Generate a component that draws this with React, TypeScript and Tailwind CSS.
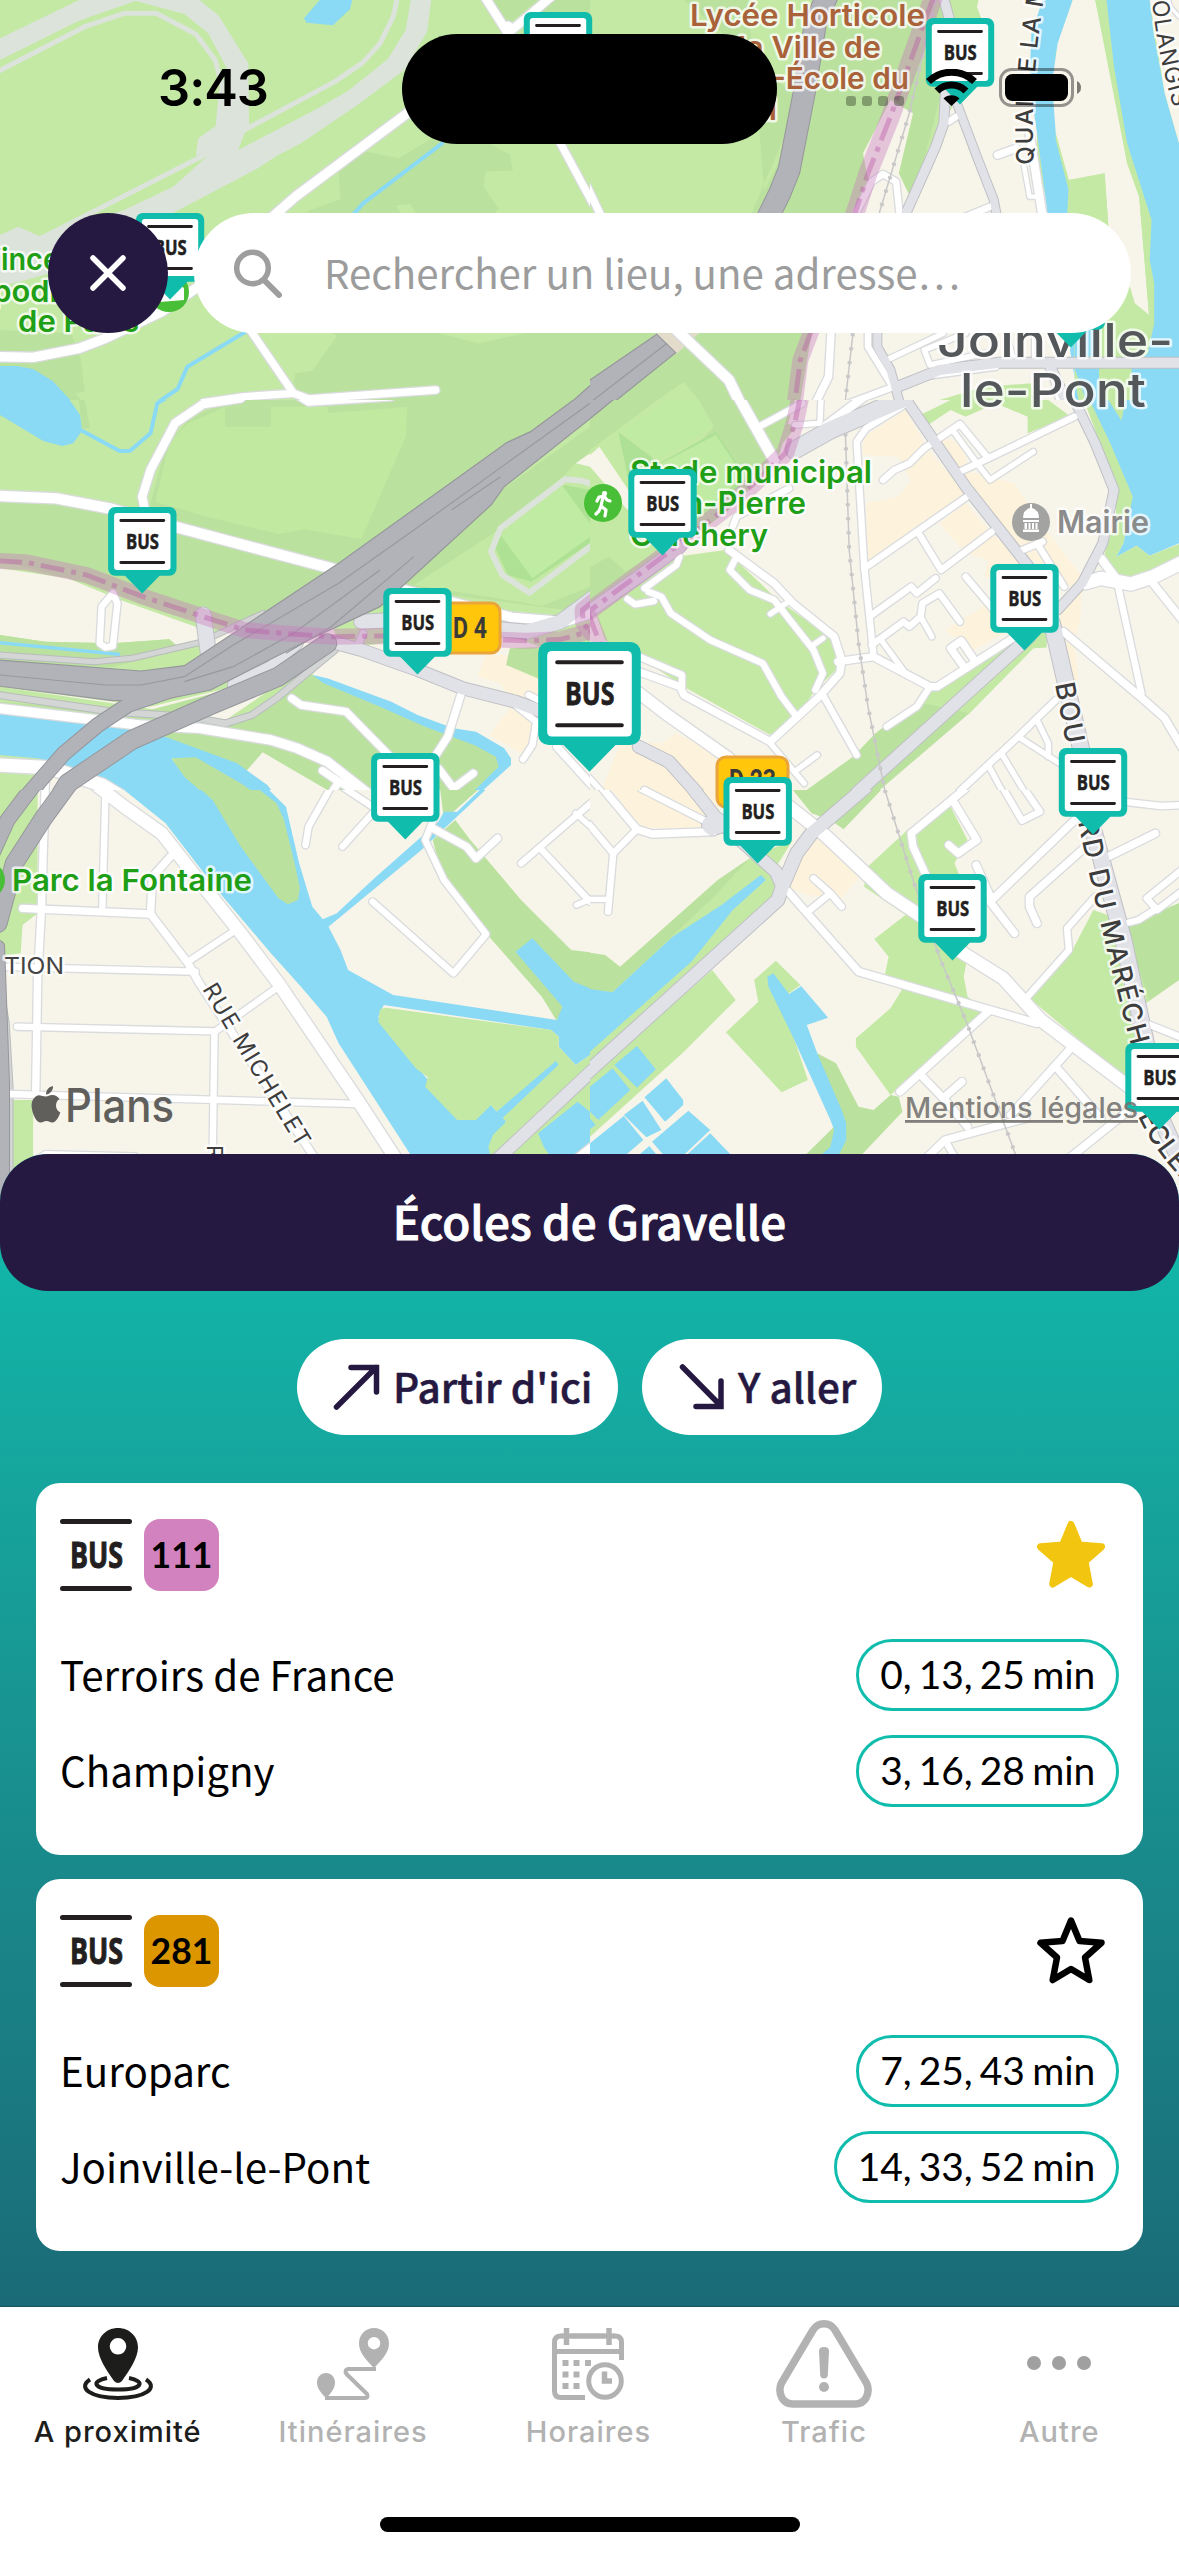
import React from "react";

const CJK = "font-['Noto_Sans_CJK_JP','Open_Sans',sans-serif]";
const LATO = "font-['Lato',sans-serif]";
const INTER = "font-['Inter',sans-serif]";

/* ------------------------------------------------------------------ map */

const LIGHT = "#c4e9a4";
const PARK = "#bbe19f";
const SAND = "#f7f4ea";
const WATER = "#8adaf5";
const SHOP = "#fdf2db";
const TRACK = "#dbe3da";

type Area = [fill: string, d: string];
type Line = [width: number, d: string];

type TileData = {
  x: number;
  y: number;
  w: number;
  base: string;
  areas: Area[];
  streams?: Line[];
  paths?: Line[];
  streets: Line[];
  avenues?: Line[];
  ramps?: Line[];
  motorways?: Line[];
  motorwayAreas?: string[];
  lanes?: string[];
  metro?: Line[];
  rail?: string[];
};

const tiles: TileData[] = [
  {
    x: 0,
    y: 0,
    w: 590,
    base: LIGHT,
    areas: [
      [PARK, "M900 520 L950 450 L1060 475 L1170 400 L1300 430 L1355 465 L1363 512 L1290 515 L1285 560 L1325 625 L1310 650 H1110 L1090 612 L1052 616 L1070 650 H820 V632 L905 598Z"],
      [PARK, "M780 1150 L785 1120 L830 1112 L895 1008 L870 990 H1130 L1272 1030 L1395 1000 L1568 990 V1200 H800Z"],
      [PARK, "M0 990 L190 1000 L215 1080 L225 1175 L200 1180 L215 1200 H0Z"],
      [PARK, "M1300 0 H1430 L1355 70 L1335 60Z"],
      [PARK, "M1465 0 H1568 V40 L1400 40Z"],
      [TRACK, "M0 115 L210 0 H530 L580 45 L660 190 L662 378 L650 400 L633 450 L573 455 L520 467 L527 415 L573 378 L582 270 L605 210 L553 100 L490 42 L360 3 L210 62 L0 180Z"],
      [TRACK, "M633 450 L850 322 L925 272 L1030 178 L1078 90 L1092 0 H1146 L1135 95 L1075 210 L950 315 L800 430 L735 468 L685 505 L450 645 L200 800 L0 860 V705 L48 680 L105 708 L330 630 L460 560 L572 448Z"],
      [WATER, "M808 55 L850 0 H936 L930 28 L885 76 L815 68Z"],
      [WATER, "M0 1098 H45 L88 1107 L140 1143 L187 1200 H0Z"],
    ],
    streams: [
      [4, "M1175 430 L965 610 L930 655"],
      [4, "M660 990 L498 1100 L472 1167 L425 1203"],
    ],
    paths: [
      [5, "M-5 214 L225 80 L330 40 H415 L520 102 L572 180 L590 260"],
      [5, "M570 450 L100 720"],
      [5, "M650 390 L890 245 L965 187 L1010 130 L1045 50 L1055 0"],
    ],
    streets: [
      [11, "M1100 325 L785 590 L720 655"],
      [10, "M1288 -10 L1350 100 L1465 -10"],
      [12, "M1350 80 V130"],
      [9, "M1480 410 L1580 620"],
      [9, "M665 990 L780 1180 L820 1197 L1158 1170"],
      [9, "M780 1180 L650 1190 L540 1208"],
      [11, "M-5 1070 L88 1072 L210 1045 L280 1015 L430 935 L540 850"],
    ],
    motorwayAreas: ["M1515 1210 L1580 1145 V1210Z"],
  },
  {
    x: 590,
    y: 0,
    w: 589,
    base: LIGHT,
    areas: [
      [PARK, "M250 0 L420 0 L470 640 H430 L560 300Z"],
      [PARK, "M600 0 H1020 L930 300 L850 650 H430 L540 400Z"],
      [PARK, "M0 990 H700 V1200 H0Z"],
      [LIGHT, "M180 1200 L250 1145 L290 1200Z"],
      ["#e3dccb", "M175 1000 L230 1062 L290 1000Z"],
      [LIGHT, "M960 0 H1040 L1085 120 L1000 260Z"],
      [SAND, "M1035 0 H1250 L1190 200 V500 L1230 650 V990 H1290 V1200 H560 L590 1000 L690 700 L740 540 L727 460 L800 300 L860 340 L822 520 L850 585 L930 380 L1070 140 L1030 20Z"],
      [WATER, "M1205 0 H1285 L1240 160 V420 L1290 640 V1200 H1300 L1218 640 L1190 400 L1170 250 L1175 100Z"],
      [SAND, "M1285 0 H1345 L1375 160 L1400 300 L1430 490 L1462 590 L1488 945 L1450 910 L1380 680 L1370 520 L1275 540 L1240 400 L1230 250 L1245 130Z"],
      [LIGHT, "M1275 540 L1370 520 L1380 680 L1440 870 L1450 910 L1488 945 V1070 H1290 L1270 650Z"],
      [WATER, "M1290 930 H1350 V1070 H1290Z"],
      [LIGHT, "M1345 0 H1378 L1395 200 L1430 430 L1495 660 L1490 780 L1502 850 V970 L1480 1070 L1488 940 L1462 590 L1430 490 L1390 260Z"],
      [WATER, "M1375 0 H1490 L1500 100 L1530 280 L1568 430 V1200 H1440 V1100 L1485 1060 L1502 970 V850 L1490 780 L1495 660 L1430 430 L1395 200Z"],
      [SAND, "M1490 0 H1568 V430 L1530 280Z"],
      [WATER, "M1290 1105 H1360 V1200 H1320Z"],
      [LIGHT, "M1355 1105 H1442 V1180 L1420 1200 H1355Z"],
      [LIGHT, "M1050 1160 L1175 1150 L1180 1200 H930Z"],
    ],
    streets: [
      [8, "M700 660 L750 545 L780 522 L815 545 L825 650"],
      [9, "M1085 465 L1135 445"],
      [6, "M1155 495 L1170 590 H1190"],
      [10, "M1170 400 L1205 650"],
      [8, "M1000 650 L1070 618"],
      [8, "M955 365 L975 350"],
      [12, "M230 990 L370 1140 L400 1210"],
      [9, "M-20 530 L30 650"],
      [9, "M642 990 L635 1130 L600 1210"],
      [8, "M740 990 V1040 L800 1150"],
      [7, "M940 1000 L790 1080"],
      [7, "M1050 1060 L905 1095 L890 1050 L1000 1000"],
      [8, "M690 1210 L880 1130 L1080 1100"],
      [4, "M1180 1080 V990"],
      [5, "M1130 1080 L1110 1000"],
      [8, "M1225 1100 L1250 1200"],
      [5, "M1568 50 L1545 20 L1540 0"],
    ],
    avenues: [
      [11, "M940 -10 L960 70 L945 300 L942 370 L920 440 L835 655"],
      [10, "M970 290 L1030 470 L1075 600 L1085 660"],
      [10, "M765 985 V1040 L800 1110 L825 1210"],
      [12, "M820 1160 L930 1110 L1090 1088 H1580"],
      [12, "M1220 1088 L1270 1210"],
    ],
    motorways: [[23, "M630 -10 L600 70 L570 280 L530 510 L505 580 L470 660"]],
    motorwayAreas: ["M178 1003 L228 1058 L60 1210 H-10 V1148Z"],
    lanes: ["M205 1030 L0 1208"],
    metro: [
      [19, "M915 -10 L870 130 L800 350 L740 520 L700 660"],
      [16, "M592 985 L560 1080 L545 1210"],
    ],
    rail: ["M920 0 L850 340 L770 640", "M700 1000 L680 1200"],
  },
  {
    x: 0,
    y: 400,
    w: 590,
    base: LIGHT,
    areas: [
      [PARK, "M210 0 H225 L240 85 H218Z"],
      [PARK, "M440 140 L500 60 L600 0 H1568 L900 500 L470 370 L395 330Z"],
      ["#c2e9a0", "M500 70 L600 20 H870 L873 40 L1083 20 L1078 110 L960 417 L808 388 L742 402 L550 350 L413 305 L450 130Z"],
      [PARK, "M598 20 H720 V80 H598Z"],
      [PARK, "M0 300 L150 300 L290 330 L480 390 L880 510 L700 640 L640 690 L440 640 L260 560 L0 480Z"],
      [PARK, "M1568 80 L1340 265 L1040 560 L1100 570 L1568 640Z"],
      [LIGHT, "M1345 375 L1500 225 L1530 190 H1568 V560 L1440 618 L1380 605 L1100 555Z"],
      [SAND, "M1530 190 L1568 160 V200Z"],
      ["#afe195", "M1325 415 L1500 255 L1568 270 V430 L1412 545 L1350 525 L1315 440Z"],
      ["#c0eba3", "M1330 405 L1495 258 L1568 370 V410 L1415 535Z"],
      [SAND, "M0 505 L180 535 L320 600 L520 680 L540 720 L470 737 L450 718 L300 730 L120 725 L0 705Z"],
      [PARK, "M0 705 L120 725 L300 730 L450 718 L470 737 L520 740 L300 800 H0Z"],
      [SAND, "M0 860 L600 960 L900 730 L860 600 L700 640 L560 720 L620 860 L400 920Z"],
      [PARK, "M380 935 L600 870 L610 880 L560 900 L440 960Z"],
      [PARK, "M0 905 L440 945 L600 980 L830 825 L1200 990 L1350 1080 L1230 1200 H500 L440 1010 L0 940Z"],
      [SAND, "M860 780 L900 750 L1300 680 L1568 800 V1200 H1235 L1350 1095 V1070 L1260 1000 L1140 965 L830 825Z"],
      [SHOP, "M1290 765 H1355 L1345 795 L1430 835 V900 L1345 880 L1330 850 L1268 830Z"],
      [SHOP, "M1355 925 L1425 970 L1400 1070 L1300 1005Z"],
      [PARK, "M1355 745 L1460 740 V850 L1345 795Z"],
      [SAND, "M698 1057 L870 1170 L880 1200 H740 L710 1155 L653 1115Z"],
      [WATER, "M0 940 L370 985 L450 1015 L630 1090 L710 1155 L742 1200 H705 L640 1150 L520 1072 L455 1075 L490 1130 L560 1200 H360 L290 1140 L100 1075 L0 1065Z"],
      [SAND, "M120 1130 L260 1140 L350 1200 H110Z"],
      [WATER, "M830 825 L870 835 L1040 905 L1110 945 L1205 985 L1265 995 L1340 1045 L1358 1075 V1095 L1255 1200 H1235 L1325 1100 L1318 1070 L1260 1035 L1130 980 L1010 920 L860 850Z"],
      [WATER, "M0 0 H185 L213 45 L218 92 L195 130 L165 138 L115 123 L0 45Z"],
    ],
    streams: [
      [4, "M218 92 L318 153 H345 L400 100 L418 10 L440 -5"],
      [3.5, "M0 728 L315 763"],
    ],
    paths: [[6, "M1580 255 L1545 242 L1502 238 L1330 385 L1305 455 L1335 525 L1407 578 L1580 430"]],
    streets: [
      [12, "M-5 288 L150 295 L290 325 L480 385 L890 508"],
      [10, "M640 -5 L540 12 L465 70 L400 210 L378 290 L385 330"],
      [8, "M780 -20 L820 8 L1040 -8"],
      [11, "M1040 560 L1180 600 L1360 652 L1500 665 L1568 640"],
      [8, "M300 580 L270 620 L265 730 L280 742 L300 738 L312 610Z"],
      [11, "M-5 925 L370 975 L530 985 L720 1020 L790 1045 L870 1085 L1000 1200"],
      [15, "M-5 1095 L130 1103 L270 1155 L350 1210"],
      [6, "M125 1130 L122 1200"],
      [6, "M280 1160 L290 1200"],
      [9, "M775 895 L800 915 L920 935 L1050 1085"],
      [9, "M1226 880 L1190 1010 L1150 1080"],
      [9, "M857 1112 L900 1145 L865 1210"],
      [9, "M900 1145 L1000 1210"],
      [9, "M1165 1105 L1205 1165 L1258 1120"],
      [8, "M1405 885 L1440 905"],
      [8, "M1370 915 L1425 965 L1415 1035 L1390 1078"],
      [9, "M1480 1040 L1580 1165"],
    ],
    ramps: [
      [7, "M-5 765 L250 785 L350 775 L530 728 L700 640"],
      [8, "M-5 885 L300 935 L500 950 L600 970 L670 945 L740 890 L890 750"],
    ],
    avenues: [
      [17, "M540 645 L555 770"],
      [13, "M620 855 L720 800 L790 730"],
      [9, "M945 750 L965 700"],
      [14, "M880 725 L960 750 L1110 810 L1230 865 L1370 905 L1440 935 L1500 980"],
      [16, "M960 665 L1050 660 L1300 685 L1400 695 L1490 665 L1580 590"],
    ],
    motorways: [
      [16, "M560 830 L340 915 L260 975 L170 1060 L50 1215"],
      [20, "M870 730 L740 830 L560 915 L350 1020 L180 1150 L145 1215"],
    ],
    motorwayAreas: [
      "M1530 -5 L1410 95 L1348 127 L900 490 L490 797 L375 813 L-5 780 V858 L300 902 L430 900 L560 870 L680 800 L820 720 L1010 620 L1305 315 L1340 260 L1575 50 V-5Z",
    ],
    lanes: [
      "M1568 10 L1100 390 L900 550 L620 735 L490 830",
      "M1100 470 L880 680 L760 760",
      "M1010 510 L780 700 L620 800 L490 845",
      "M0 825 L280 855 H375 L490 830",
      "M1330 230 L1200 330",
    ],
    metro: [
      [16, "M-5 483 L70 487 L230 525 L380 590 L540 650 L650 690 L750 700 L880 710 L1020 708 L1400 722 L1490 718 L1580 690"],
      [16, "M1580 600 L1548 630 L1550 670 L1580 710"],
    ],
  },
  {
    x: 590,
    y: 400,
    w: 589,
    base: SAND,
    areas: [
      [PARK, "M0 0 H545 L520 100 L500 180 L370 330 L0 640Z"],
      [LIGHT, "M0 150 L180 0 H290 L330 80 L230 200 V420 L0 580Z"],
      ["#aee096", "M75 95 L185 190 L335 95 L420 240 L310 330 L120 330Z"],
      ["#c0eba3", "M85 95 L205 0 H290 L325 80 L180 180Z"],
      ["#c0eba3", "M190 190 L335 105 L410 230 L300 330 H150Z"],
      [SAND, "M0 165 L25 140 L120 300 L100 330 L0 200Z"],
      [PARK, "M0 500 L50 470 L110 530 L0 620Z"],
      [LIGHT, "M15 640 L230 470 L360 450 L500 600 L650 720 L655 810 L600 870 L550 950 L480 1005 L250 860 L130 770 L40 720Z"],
      [LIGHT, "M600 730 L650 750 L655 810 L620 820Z"],
      [PARK, "M450 90 L500 60 L550 80 L490 160Z"],
      [PARK, "M540 1200 L700 1070 L760 1000 L870 905 L920 870 L1100 740 L1150 700 H1215 V742 L1180 745 L1010 940 L740 1200Z"],
      [LIGHT, "M870 905 L985 815 L1150 700 H1215 V742 L1180 745 L1010 940Z"],
      [LIGHT, "M870 50 L960 0 H1220 L1280 50 L1240 65 L1165 100 V50 L1080 10 L1000 50 L960 30 L900 75Z"],
      [WATER, "M1325 0 H1568 V430 L1490 467 L1455 437 L1400 472 L1420 430 L1440 300 L1380 130Z"],
      [LIGHT, "M1315 0 H1330 L1385 130 L1445 290 L1420 430 L1400 472 L1455 437 L1490 467 L1568 432 V480 L1430 540 L1390 520 L1370 460 L1400 350 V260Z"],
      [LIGHT, "M1380 0 H1425 L1415 62Z"],
      [SHOP, "M730 110 L840 30 L900 150 L1000 280 L870 400 L740 490 L735 310 L820 290 L855 240 L820 170 L725 165Z"],
      [SHOP, "M930 110 L990 130 L1010 215 L1130 250 L1200 370 L1310 530 L1305 660 L1290 720 L1300 840 L1270 840 L1250 640 L1280 560 L1150 460 L1000 260Z"],
      [SHOP, "M930 370 L1000 310 L1070 400 L1150 480 V560 L1050 530 L1060 480 L1000 460Z"],
      [SHOP, "M945 690 L1075 600 L1120 690 L1020 750 L985 720Z"],
      [SHOP, "M230 1000 L345 1065 V1200 H20 L80 1030 H190Z"],
    ],
    streets: [
      [12, "M395 -10 L490 180"],
      [8, "M450 80 L565 10"],
      [7, "M615 -5 L612 70 L545 75"],
      [10, "M730 -10 L630 75"],
      [8, "M850 5 L735 85 L710 125 L730 500 L755 770"],
      [8, "M780 240 L810 210 L850 190 L890 145 L985 72 L1060 175 L1290 50"],
      [8, "M985 215 L1060 175"],
      [7, "M965 90 L1030 190 L1065 240 L1180 155"],
      [8, "M730 505 L1010 285"],
      [8, "M875 400 L935 510 L1070 395"],
      [8, "M1000 530 L1075 630"],
      [8, "M750 645 L855 560 L870 580 L920 535"],
      [8, "M750 735 L835 665 L850 680 L880 650 L885 610 L930 580 L985 665"],
      [7, "M880 650 L910 710"],
      [7, "M775 720 L840 820"],
      [9, "M660 785 L755 770 L905 860 H925 L1160 690"],
      [8, "M905 860 L870 920 L790 980"],
      [9, "M370 450 L490 550 L540 610 L650 710 L670 780 L665 820 L610 890 L480 1025 L250 885 L240 860 L130 815"],
      [8, "M390 470 L372 510 L425 570 L490 600 L595 750 L620 820 L600 870"],
      [7, "M480 642 L535 600"],
      [7, "M598 732 L620 715"],
      [8, "M100 597 L120 613 L170 603"],
      [8, "M238 470 L230 495 L145 565"],
      [8, "M155 575 L190 590 L215 640 L320 720 L460 790 L510 890 L550 950"],
      [8, "M120 765 L245 825 V860"],
      [8, "M620 885 L710 1065"],
      [13, "M120 870 L200 940 L370 1075"],
      [7, "M480 1030 L570 1150"],
      [7, "M545 1115 L605 1065"],
      [15, "M1320 548 L1360 535 L1440 552 L1500 530 L1580 485"],
      [10, "M1360 475 L1400 535"],
      [8, "M1405 555 L1468 880"],
      [9, "M1495 545 L1580 665"],
      [9, "M1260 695 L1470 895 L1530 955 L1580 1050"],
      [8, "M1240 900 L1140 1010 L950 1210"],
      [7, "M1140 1010 L1250 1090"],
      [7, "M1190 960 L1220 1030 V1070"],
      [7, "M1060 1095 L1115 1210"],
      [7, "M1095 1060 L1175 1210"],
      [9, "M995 800 L960 745 L988 722 L1020 775"],
      [8, "M1140 455 L1205 425"],
      [8, "M1190 430 L1262 560"],
      [8, "M380 380 L390 350 L530 265"],
      [8, "M145 1170 L210 1210"],
      [7, "M-5 1130 L60 1210"],
    ],
    avenues: [
      [19, "M545 150 L640 90 L835 -5"],
      [12, "M835 -10 L1000 260 L1175 510"],
      [11, "M1285 -10 L1345 130 L1395 270 L1365 430 L1310 550 L1245 630"],
      [18, "M1230 670 L1310 1060"],
      [14, "M1170 710 L680 1210"],
      [14, "M-10 640 L130 530 L240 440"],
      [14, "M130 1040 L210 1085 L310 1210"],
    ],
    motorwayAreas: ["M-10 -10 H72 L-10 65Z"],
    metro: [
      [18, "M560 -10 L545 70 L520 160 L390 300 L170 490 L-10 640"],
      [16, "M-5 640 L30 740"],
    ],
    rail: ["M680 100 L690 450 L715 730 L740 920 L790 1200"],
  },
  {
    x: 0,
    y: 790,
    w: 590,
    base: SAND,
    areas: [
      [LIGHT, "M0 0 H100 V370 L60 405 L55 490 L0 500Z"],
      [LIGHT, "M30 930 H88 V1200 H30Z"],
      [PARK, "M1170 0 H1270 L1180 90Z"],
      [PARK, "M1150 150 L1210 90 L1250 150 L1385 330 L1518 480 L1568 487 V600 L1478 690 L1440 620 L1300 440 L1180 280Z"],
      [WATER, "M330 0 L440 100 L570 290 L720 490 L800 590 L868 680 L900 760 L1100 1110 H1300 L1345 995 L1330 970 L1484 825 L1478 812 L1320 965 L1305 945 L1200 960 L1005 680 L1020 645 L1465 720 L1485 740 V770 L1530 825 L1568 795 V595 L1525 575 L1415 445 L1370 485 L1495 650 L1480 690 L1045 615 L925 540 L905 480 L873 410 L1120 180 L1290 0 H1275 L1215 65 H1180 L1165 95 L1110 150 L995 265 L895 370 L858 388 L830 350 L795 220 L760 50 L715 0Z"],
      [PARK, "M535 0 H690 L735 40 L755 90 L785 230 L797 295 L792 330 L765 343 L740 325 L640 170 L565 30Z"],
      [LIGHT, "M1025 653 L1200 680 L1465 720 L1485 740 V770 L1530 825 L1320 965 L1305 945 L1265 990 H1215 L1130 890 L1137 862 L1105 835 L1005 695 L1010 658Z"],
      [LIGHT, "M1305 1110 L1298 1070 L1310 1035 L1345 995 L1335 982 L1484 825 L1530 825 L1568 795 V1110Z"],
      [WATER, "M1305 960 L1320 965 L1478 812 L1484 825 L1335 985Z"],
      [WATER, "M1430 1030 L1535 935 L1568 965 V1060 L1520 1110 H1470 L1445 1070Z"],
    ],
    streets: [
      [9, "M120 -5 L110 360 L100 560 L95 900"],
      [8, "M280 20 L272 350"],
      [9, "M60 355 L400 372 L500 520 L530 580 L840 1110"],
      [9, "M400 372 L405 260 L465 185"],
      [14, "M250 -20 L330 50 L430 130 L520 260 L640 430 L740 580 L950 930 L1060 1120"],
      [8, "M500 515 L620 425"],
      [8, "M-5 530 L520 545"],
      [8, "M575 722 L740 590"],
      [8, "M45 710 L570 724 L565 1110"],
      [8, "M20 912 L955 942"],
      [5, "M90 1110 L120 1088 L360 1095"],
      [8, "M880 -10 L820 110 L812 165"],
      [8, "M990 70 L910 170"],
      [8, "M910 -10 L990 50"],
      [8, "M1155 80 L1130 150 L1180 270 L1292 433 L1205 550 L990 335"],
      [9, "M1150 115 L1240 170 L1265 205 L1322 145"],
      [8, "M1385 220 L1580 30"],
      [8, "M1440 180 L1568 335"],
      [7, "M1532 345 L1580 322"],
      [7, "M1530 70 L1580 120"],
      [10, "M1530 1110 L1580 1065"],
    ],
    avenues: [[14, "M1310 1120 L1580 835"]],
    ramps: [[6, "M-5 540 L18 700 L28 890 V1200"]],
    motorways: [
      [16, "M90 -15 L20 90 L-20 190"],
      [19, "M180 -15 L115 85 L38 220 L-5 400"],
      [14, "M-5 470 L8 880 V1200"],
    ],
  },
  {
    x: 590,
    y: 790,
    w: 589,
    base: SAND,
    areas: [
      [SHOP, "M60 0 H340 V110 L200 115 L130 110Z"],
      [LIGHT, "M425 205 L540 150 L490 240 L515 300 L0 870 V600 L60 607Z"],
      [PARK, "M425 205 L340 270 L80 530 L40 495 L0 488 V600 L60 607 L330 320Z"],
      [PARK, "M540 0 H775 L675 118 L640 90 L590 70Z"],
      [SHOP, "M545 155 L620 130 L715 265 L670 325 L580 315 L520 290Z"],
      [WATER, "M455 255 L468 270 L380 360 L270 515 L0 785 V597 L60 607 L220 440 L350 345Z"],
      [LIGHT, "M325 540 L388 630 L250 785 L0 1040 V860Z"],
      [WATER, "M65 825 L125 768 L175 838 L125 893Z"],
      [WATER, "M0 890 L60 835 L107 900 L22 990 L0 965Z"],
      [WATER, "M0 985 L15 1005 L0 1018Z"],
      [WATER, "M145 922 L203 865 L248 930 V945 L200 995Z"],
      [WATER, "M90 975 L140 932 L190 1020 L150 1042Z"],
      [WATER, "M0 1060 L90 978 L142 1050 L90 1100 H0Z"],
      [WATER, "M130 1095 L158 1068 L178 1095Z"],
      [WATER, "M165 1055 L262 962 L320 1020 L245 1100 H200Z"],
      [WATER, "M260 1092 L320 1030 L380 1100Z"],
      [LIGHT, "M495 512 L560 585 L530 610 L500 600 L580 870 L510 907 L362 727 L448 635 L437 570Z"],
      [PARK, "M605 790 L655 820 L715 950 L755 960 L800 915 L822 920 L832 965 L710 1110 H560 L650 1010Z"],
      [WATER, "M472 560 L488 550 L530 612 L562 588 L634 683 L577 705 L605 790 L670 960 L682 1000 V1050 L660 1100 H610 L640 1070 L650 1020 L640 990 L540 740 L475 590Z"],
      [LIGHT, "M735 235 L845 120 L960 50 L1005 150 L970 220 L1000 300 L1005 500 L995 560 L1005 620 L1060 665 L800 915 L708 770 V745 L800 655 L830 600 L785 555 L795 500 L757 447 L840 375 L730 290Z"],
      [LIGHT, "M1340 360 L1440 400 L1568 340 V570 L1480 640 L1430 870 L1170 625 L1280 490Z"],
      [PARK, "M1420 410 L1568 340 V570 L1490 630Z"],
    ],
    streets: [
      [9, "M30 -10 L125 118 L165 132 L330 125"],
      [8, "M125 118 L62 190 L48 365"],
      [7, "M-5 328 H50"],
      [8, "M-5 100 L62 190"],
      [8, "M135 -5 L310 95"],
      [14, "M525 45 L620 130 L790 310 L890 385"],
      [14, "M980 480 L1100 565 L1200 690 L1440 895"],
      [9, "M520 295 L715 545 L1050 655 L1190 700"],
      [8, "M580 365 L640 310 L670 350"],
      [8, "M595 265 L640 310"],
      [9, "M1000 -5 L855 130 L860 170 L900 270"],
      [9, "M965 30 L1030 150 L980 190 L955 165"],
      [8, "M1100 -5 L1150 92 L1198 65 L1155 -5"],
      [9, "M1300 80 L1070 330 L1028 225"],
      [9, "M1065 335 L1130 430"],
      [9, "M1315 175 L1170 320 V350 L1190 400"],
      [9, "M1380 200 L1505 130"],
      [8, "M1420 35 L1520 48 L1580 45"],
      [8, "M1580 235 L1482 325 L1510 360 L1580 300"],
      [8, "M1510 355 L1460 390 L1410 405"],
      [8, "M1345 320 L1270 415 L1275 480 L1165 620"],
      [9, "M1060 665 L825 905"],
      [9, "M885 860 L945 930 L1005 1010"],
      [9, "M940 925 L990 875"],
      [9, "M1280 775 L1120 975"],
      [9, "M1240 830 L1360 985"],
      [9, "M1430 965 L1270 1110"],
      [9, "M890 1110 L945 1050 L1160 985"],
      [8, "M945 1050 L975 1110"],
      [8, "M1480 700 L1580 745"],
    ],
    avenues: [
      [14, "M270 -10 L340 90 L420 170 L495 245 L512 290"],
      [15, "M735 -10 L590 130 L550 190 L512 290 L500 330 L-10 850"],
      [22, "M325 105 L340 100"],
      [18, "M1330 80 L1420 450 L1480 760 L1510 960 L1590 1160"],
    ],
    rail: ["M785 0 L860 270 L930 500 L1000 690 L1135 1100"],
  },
];

const Strokes = ({ lines, color, extra }: { lines?: Line[]; color: string; extra: number }) => (
  <g fill="none" stroke={color} strokeLinejoin="round" strokeLinecap="round">
    {lines?.map(([w, d], i) => (
      <path key={i} d={d} strokeWidth={w + extra} vectorEffect="non-scaling-stroke" />
    ))}
  </g>
);

const Tile = ({ t }: { t: TileData }) => (
  <svg x={t.x} y={t.y} width={t.w} height={t.y === 790 ? 412 : 400} viewBox={t.y === 790 ? "0 0 1568 1236" : "0 0 1568 1200"} preserveAspectRatio="none">
    <rect width="1568" height="1236" fill={t.base} />
    {t.areas.map(([fill, d], i) => (
      <path key={i} d={d} fill={fill} />
    ))}
    <Strokes lines={t.streams} color={WATER} extra={0} />
    <Strokes lines={t.paths} color={TRACK} extra={0} />
    <Strokes lines={t.ramps} color="#b9bcbc" extra={0} />
    <Strokes lines={t.ramps} color="#d3d6d5" extra={-2} />
    <Strokes lines={t.streets} color="#d9dbdd" extra={1} />
    <Strokes lines={t.avenues} color="#bfc0c5" extra={0} />
    <Strokes lines={t.streets} color="#ffffff" extra={-1.6} />
    <Strokes lines={t.avenues} color="#e1e2e7" extra={-2} />
    <Strokes lines={t.motorways} color="#96979b" extra={0} />
    {t.motorwayAreas?.map((d, i) => (
      <path key={i} d={d} fill="#b2b3b9" stroke="#96979b" strokeWidth="1.2" vectorEffect="non-scaling-stroke" />
    ))}
    <Strokes lines={t.motorways} color="#b2b3b9" extra={-2} />
    <g fill="none" stroke="#98999d" strokeWidth="1.2">
      {t.lanes?.map((d, i) => (
        <path key={i} d={d} vectorEffect="non-scaling-stroke" />
      ))}
    </g>
    <g fill="none" stroke="#c8c8c8" strokeWidth="1.5">
      {t.rail?.map((d, i) => (
        <React.Fragment key={i}>
          <path d={d} vectorEffect="non-scaling-stroke" />
          <path d={d} strokeWidth="4" strokeDasharray="3 11" vectorEffect="non-scaling-stroke" />
        </React.Fragment>
      ))}
    </g>
    <g fill="none" strokeLinejoin="round">
      {t.metro?.map(([w, d], i) => (
        <React.Fragment key={i}>
          <path d={d} stroke="#c77dbd" strokeOpacity="0.4" strokeWidth={w} vectorEffect="non-scaling-stroke" />
          <path d={d} stroke="#b958a8" strokeOpacity="0.4" strokeWidth="5" strokeDasharray="24 7 5 7" vectorEffect="non-scaling-stroke" />
        </React.Fragment>
      ))}
    </g>
  </svg>
);

type Label = { x: number; y: number; size: number; len: number; text: string; fill: string; weight?: number };

const labels: Label[] = [
  { x: 690, y: 26, size: 30, len: 235, text: "Lycée Horticole", fill: "#a9623a", weight: 600 },
  { x: 738, y: 58, size: 30, len: 143, text: "la Ville de", fill: "#a9623a", weight: 600 },
  { x: 772, y: 89, size: 30, len: 137, text: "-École du", fill: "#a9623a", weight: 600 },
  { x: 690, y: 120, size: 30, len: 87, text: "Breuil", fill: "#a9623a", weight: 600 },
  { x: -20, y: 270, size: 30, len: 148, text: "Vincennes", fill: "#1f9f16", weight: 600 },
  { x: -54, y: 302, size: 30, len: 180, text: "hippodrome", fill: "#1f9f16", weight: 600 },
  { x: 18, y: 332, size: 30, len: 121, text: "de Paris", fill: "#1f9f16", weight: 600 },
  { x: 630, y: 483, size: 31, len: 242, text: "Stade municipal", fill: "#1f9f16", weight: 600 },
  { x: 630, y: 514, size: 31, len: 176, text: "Jean-Pierre", fill: "#1f9f16", weight: 600 },
  { x: 630, y: 546, size: 31, len: 138, text: "Garchery", fill: "#1f9f16", weight: 600 },
  { x: 12, y: 891, size: 30, len: 240, text: "Parc la Fontaine", fill: "#1f9f16", weight: 600 },
  { x: 1057, y: 533, size: 31, len: 92, text: "Mairie", fill: "#8b8b8b", weight: 600 },
  { x: 937, y: 357, size: 47, len: 236, text: "Joinville-", fill: "#55585b", weight: 500 },
  { x: 960, y: 407, size: 47, len: 186, text: "le-Pont", fill: "#55585b", weight: 500 },
  { x: 4, y: 974, size: 23, len: 60, text: "TION", fill: "#444444", weight: 400 },
];

const Bus = ({ x, y, w, h, bold }: { x: number; y: number; w: number; h: number; bold: number }) => (
  <text x={x} y={y} fontSize={h} textLength={w} lengthAdjust="spacingAndGlyphs" fontWeight="700" fill="#231f20" stroke="#231f20" strokeWidth={bold} className="font-['Open_Sans',sans-serif]">
    BUS
  </text>
);

const pins: [number, number, number][] = [
  [558, 12, 1],
  [170, 213, 1],
  [960, 18, 1],
  [1070.8, 261, 1],
  [142.3, 507, 1],
  [662.5, 469, 1],
  [1024.5, 564, 1],
  [417.5, 588, 1],
  [405.3, 753, 1],
  [757.7, 777, 1],
  [1093, 748, 1],
  [952.5, 874, 1],
  [1159.5, 1043, 1],
  [589.5, 642, 1.5],
];

const Map = () => (
  <svg className="absolute inset-0 h-[1202px] w-[1179px]" viewBox="0 0 1179 1202">
    {tiles.map((t, i) => (
      <Tile key={i} t={t} />
    ))}

    <g className={INTER} stroke="#ffffff" strokeOpacity="0.75" strokeWidth="5" strokeLinejoin="round" paintOrder="stroke">
      {labels.map((l) => (
        <text key={l.text} x={l.x} y={l.y} fontSize={l.size} fontWeight={l.weight} fill={l.fill} textLength={l.len} lengthAdjust="spacingAndGlyphs">
          {l.text}
        </text>
      ))}
      <path id="quai" d="M1036 184 Q1026 100 1047 -20" fill="none" stroke="none" />
      <path id="polangis" d="M1152 1 Q1158 60 1178 122" fill="none" stroke="none" />
      <path id="bd1" d="M1055 684 L1070 765" fill="none" stroke="none" />
      <path id="bd2" d="M1078 822 Q1100 930 1134 1056" fill="none" stroke="none" />
      <path id="bd3" d="M1138 1116 Q1158 1160 1200 1196" fill="none" stroke="none" />
      <path id="michelet" d="M202 989 Q248 1066 300 1152" fill="none" stroke="none" />
      <path id="ruer" d="M207 1145 V1200" fill="none" stroke="none" />
      <g fill="#3d3d3d" fontWeight="500">
        <text fontSize="24" letterSpacing="1.4"><textPath href="#quai" startOffset="20">QUAI DE LA MARNE</textPath></text>
        <text fontSize="23" letterSpacing="1.2" fontWeight="400"><textPath href="#polangis">OLANGIS</textPath></text>
        <text fontSize="27" letterSpacing="1.5"><textPath href="#bd1">BOU</textPath></text>
        <text fontSize="27" letterSpacing="2"><textPath href="#bd2">RD DU MARÉCH</textPath></text>
        <text fontSize="27" letterSpacing="0.5"><textPath href="#bd3">ECLERC</textPath></text>
        <text fontSize="23" letterSpacing="1.6" fontWeight="400"><textPath href="#michelet">RUE MICHELET</textPath></text>
        <text fontSize="22" fontWeight="400"><textPath href="#ruer">R</textPath></text>
      </g>
    </g>

    {/* points of interest */}
    <circle cx="603" cy="503" r="19" fill="#48bf36" />
    <g stroke="#fff" strokeWidth="3.2" strokeLinecap="round" strokeLinejoin="round" fill="none">
      <path d="M603 497 L601 506 L606 510 L605 516 M601 506 L599 511 L596 514 M597 501 L599 497 L604 496 L607 500 L610 501" />
    </g>
    <circle cx="604.5" cy="493.500" r="2.6" fill="#fff" />
    <circle cx="1031" cy="522" r="19" fill="#a3a3a2" />
    <path d="M1023 518 Q1023 510 1030 508 V504 H1032 V508 Q1039 510 1039 518Z M1023 520 H1039 V522 H1023Z M1024.500 523 H1027 V529 H1024.500Z M1028.500 523 H1030.500 V529 H1028.500Z M1032 523 H1034 V529 H1032Z M1035.500 523 H1037.500 V529 H1035.500Z M1023 529.500 H1039 V532 H1023Z" fill="#fff" />
    <circle cx="169" cy="292" r="20" fill="#48bf36" />
    <path d="M158 292 Q169 278 184 288 V300 L160 302Z" fill="#fff" />
    <circle cx="-14" cy="880" r="19" fill="#48bf36" />

    {/* road shields */}
    <rect x="430" y="603" width="70" height="50" rx="9" fill="#ffc60b" stroke="#e9a43a" strokeWidth="3" />
    <rect x="717" y="757" width="71" height="50" rx="9" fill="#ffc60b" stroke="#e9a43a" strokeWidth="3" />
    <g fill="#3a3a38" fontWeight="700" className="font-['Roboto',sans-serif]">
      <text x="453" y="638" fontSize="29" textLength="34" lengthAdjust="spacingAndGlyphs">D 4</text>
      <text x="729" y="790" fontSize="29" textLength="47" lengthAdjust="spacingAndGlyphs">D 23</text>
    </g>

    <text x="65" y="1122" fontSize="46" fontWeight="500" textLength="109" lengthAdjust="spacingAndGlyphs" fill="#605f5c" className={INTER}>Plans</text>
    <path transform="translate(31 1086)" fill="#605f5c" d="M15 10.500 C11 10.500 8.500 8 5.500 10 C1.500 12.500 0 17 .8 22 C1.600 28.500 5.500 36.500 9.500 36.500 C12 36.500 13 35 15.500 35 C18 35 19 36.500 21.300 36.500 C25.500 36.500 28.500 29 29.300 26.500 C24 24 23.500 16 28.500 13 C26.500 9.800 23.500 8.800 21 9 C18.500 9.200 16.800 10.500 15 10.500Z M15 8.500 C15 4 18 .8 22 0 C22.300 4.500 19 8.200 15 8.500Z" />

    {/* bus stops */}
    {pins.map(([cx, top, s], i) => (
      <g key={i} transform={`translate(${cx} ${top}) scale(${s})`}>
        <path d="M-19 67 H19 L0 86.500Z" fill="#10bdad" />
        <rect x="-34.200" width="68.400" height="68.700" rx="7" fill="#10bdad" />
        <rect x="-28.200" y="6" width="56.400" height="57" rx="3" fill="#fff" />
        <path d="M-21.500 13.500 H21.500 M-21.500 55.500 H21.500" stroke="#231f20" strokeWidth="2.800" strokeLinecap="round" />
        <Bus x={-16.300} y={41.800} w={33} h={21.5} bold={0.5} />
      </g>
    ))}

    <g className={INTER}>
      <text x="905" y="1118" fontSize="28" fontWeight="500" textLength="233" lengthAdjust="spacingAndGlyphs" fill="#73726f" fillOpacity="0.9" textDecoration="underline">
        Mentions légales
      </text>
    </g>
  </svg>
);

const StatusBar = () => (
  <div className="absolute inset-x-0 top-0 h-[176px]">
    <span className={`absolute left-[158px] top-[58px] text-[50.5px] font-semibold leading-[60px] tracking-[-1px] text-black ${INTER}`}>3:43</span>
    <div className="absolute left-[402px] top-[34px] h-[110px] w-[375px] rounded-full bg-black" />
    <div className="absolute left-[846px] top-[96px] flex gap-[6px] opacity-30">
      {[0, 1, 2, 3].map((i) => (
        <span key={i} className="h-[10px] w-[10px] rounded-[3px] bg-black" />
      ))}
    </div>
    <svg className="absolute left-[926px] top-[69px]" width="51" height="37" viewBox="0 0 51 37">
      <g fill="none" stroke="#000" strokeWidth="7">
        <path d="M2.500 12.500 A33 33 0 0 1 48.500 12.500" />
        <path d="M11 22 A20.500 20.500 0 0 1 40 22" />
      </g>
      <path d="M17.500 29.500 A11.500 11.500 0 0 1 33.500 29.500 L25.500 37Z" />
    </svg>
    <svg className="absolute left-[999px] top-[68px]" width="84" height="39" viewBox="0 0 84 39">
      <rect x="1.500" y="1.500" width="72" height="36" rx="11" fill="none" stroke="#000" strokeOpacity="0.4" strokeWidth="3" />
      <rect x="6" y="6" width="63" height="27" rx="7.500" />
      <path d="M78 13 Q82 15 82 19.500 Q82 24 78 26Z" fillOpacity="0.5" />
    </svg>
  </div>
);

const SearchRow = () => (
  <div className="absolute left-12 top-[213px] flex gap-[26px]">
    <button className="flex h-[120px] w-[120px] items-center justify-center rounded-full bg-[#261941]">
      <svg width="38" height="38" viewBox="0 0 38 38">
        <path d="M4 4 L34 34 M34 4 L4 34" stroke="#fff" strokeWidth="5.500" strokeLinecap="round" />
      </svg>
    </button>
    <div className="flex h-[120px] w-[937px] items-center rounded-full bg-white pl-10">
      <svg width="49" height="49" viewBox="0 0 49 49" fill="none" stroke="#9e9e9e">
        <circle cx="18.500" cy="19" r="15.800" strokeWidth="5.500" />
        <path d="M31 32 L45 46" strokeWidth="6" strokeLinecap="round" />
      </svg>
      <span className={`ml-[41px] pb-[3px] text-[40.2px] leading-[60px] text-[#9c9c9c] ${CJK}`}>Rechercher un lieu, une adresse…</span>
    </div>
  </div>
);

/* ---------------------------------------------------------------- sheet */

const BusLogo = () => (
  <svg width="72" height="72" viewBox="0 0 72 72">
    <path d="M2.500 2.500 H69.500 M2.500 69.500 H69.500" stroke="#231f20" strokeWidth="5" strokeLinecap="round" />
    <Bus x={10} y={48.5} w={53} h={35} bold={1} />
  </svg>
);

const Star = ({ on }: { on: boolean }) => (
  <svg width="72" height="72" viewBox="0 0 72 72">
    {on ? (
      <path d="M36 5.500 L44.500 26 L66.500 27.800 L50 42.500 L54.300 65 L36 54 L17.700 65 L22 42.500 L5.500 27.800 L27.500 26Z" fill="#f2c511" stroke="#f2c511" strokeWidth="7" strokeLinejoin="round" />
    ) : (
      <path d="M36 5.500 L44.500 26 L66.500 27.800 L50 42.500 L54.300 65 L36 54 L17.700 65 L22 42.500 L5.500 27.800 L27.500 26Z" fill="#fff" stroke="#000" strokeWidth="6.500" strokeLinejoin="round" />
    )}
  </svg>
);

type LineInfo = { number: string; color: string; favorite: boolean; rows: [string, string][] };

const lines: LineInfo[] = [
  { number: "111", color: "bg-[#d282be]", favorite: true, rows: [["Terroirs de France", "0, 13, 25 min"], ["Champigny", "3, 16, 28 min"]] },
  { number: "281", color: "bg-[#dc9600]", favorite: false, rows: [["Europarc", "7, 25, 43 min"], ["Joinville-le-Pont", "14, 33, 52 min"]] },
];

const LineCard = ({ line }: { line: LineInfo }) => (
  <div className="h-[372px] rounded-[24px] bg-white px-6 pt-9">
    <div className="flex h-[72px] items-center gap-3">
      <BusLogo />
      <span className={`flex h-[72px] w-[75px] items-center justify-center rounded-[16px] text-[35.5px] font-bold leading-[72px] text-black ${line.color} ${LATO}`}>{line.number}</span>
      <span className="ml-auto mr-3">
        <Star on={line.favorite} />
      </span>
    </div>
    <div className="mt-12 flex flex-col gap-6">
      {line.rows.map(([name, times]) => (
        <div key={name} className="flex h-[72px] items-center justify-between">
          <span className={`pb-[3px] text-[40.3px] leading-[66px] text-black ${CJK}`}>{name}</span>
          <span className={`flex h-[72px] items-center rounded-full border-[3px] border-[#10bdad] px-[21px] pb-[2px] text-[39px] leading-[60px] tracking-[-0.15px] text-black [word-spacing:-2.4px] ${LATO}`}>{times}</span>
        </div>
      ))}
    </div>
  </div>
);

const Arrow = ({ down }: { down?: boolean }) => (
  <svg width="48" height="48" viewBox="0 0 48 48" fill="none" stroke="#261941" strokeWidth="5.500" strokeLinecap="round" strokeLinejoin="miter">
    {down ? <path d="M4.500 4 L43 43 M43 18 V43.500 H18" /> : <path d="M3.500 44 L43 4.500 M18 4.500 H43.500 V29" />}
  </svg>
);

const Sheet = () => (
  <section className="relative -mt-12 h-[1152px] rounded-t-[48px] bg-linear-to-b from-[#0fbdad] to-[#1a6b77]">
    <h1 className={`flex h-[137px] items-center justify-center rounded-[48px] bg-[#261941] pb-[4px] text-[45.700px] font-medium text-white [-webkit-text-stroke:0.9px_#fff] ${CJK}`}>Écoles de Gravelle</h1>
    <div className="mt-12 flex justify-center gap-6">
      <button className={`flex h-24 w-[321px] items-center rounded-full bg-white pl-9 text-[40.5px] font-medium leading-[90px] text-[#261941] [-webkit-text-stroke:0.5px_#261941] ${CJK}`}>
        <Arrow />
        <span className="ml-[12px] whitespace-nowrap pb-[3px]">Partir d'ici</span>
      </button>
      <button className={`flex h-24 w-[240px] items-center rounded-full bg-white pl-9 text-[40.5px] font-medium leading-[90px] text-[#261941] [-webkit-text-stroke:0.5px_#261941] ${CJK}`}>
        <Arrow down />
        <span className="ml-[12px] whitespace-nowrap pb-[3px]">Y aller</span>
      </button>
    </div>
    <div className="mt-12 flex flex-col gap-6 px-9">
      {lines.map((l) => (
        <LineCard key={l.number} line={l} />
      ))}
    </div>
  </section>
);

/* ----------------------------------------------------------------- tabs */

const NearIcon = () => (
  <svg width="72" height="72" viewBox="0 0 72 72">
    <path fillRule="evenodd" fill="#1d1d1b" d="M36 0 C47.500 0 56 8.500 56 19.500 C56 30 47 43 40 53 Q36 57 32 53 C25 43 16 30 16 19.500 C16 8.500 24.500 0 36 0Z M36 10 A8.300 8.300 0 1 0 36 26.600 A8.300 8.300 0 1 0 36 10Z" />
    <g fill="none" stroke="#1d1d1b" strokeWidth="4">
      <path d="M25 50 C9 53 10 61.500 36 61.500 C62 61.500 63 53 47 50" />
      <path d="M8 51.500 C-5 60 9 70 36 70 C63 70 77 60 64 51.500" />
    </g>
  </svg>
);

const RouteIcon = () => (
  <svg width="72" height="72" viewBox="0 0 72 72">
    <path fillRule="evenodd" fill="#b2b2b2" d="M57 0 C65.500 0 72 6.500 72 15.500 C72 24 66 31 57 40 C48 31 42 24 42 15.500 C42 6.500 48.500 0 57 0Z M57 9 A6.200 6.200 0 1 0 57 21.400 A6.200 6.200 0 1 0 57 9Z" />
    <path fill="#b2b2b2" d="M9 45 C14 45 18 49 18 54.500 C18 60 14.500 64 10.500 69 H8 C3.500 64 0 60 0 54.500 C0 49 4 45 9 45Z" />
    <path fill="none" stroke="#b2b2b2" strokeWidth="4" strokeLinejoin="round" d="M59 41 H31 Q27 42 29.500 46 L50 66 Q51.500 70 48 70 H8" />
  </svg>
);

const ScheduleIcon = () => (
  <svg width="72" height="72" viewBox="0 0 72 72" fill="none" stroke="#b2b2b2">
    <path strokeWidth="5" d="M33 69.500 H9 Q2.500 69.500 2.500 63 V14.500 Q2.500 8 9 8 H63 Q69.500 8 69.500 14.500 V32" />
    <path strokeWidth="5" d="M2.500 23.500 H69.500" />
    <path stroke="#fff" strokeWidth="7.500" d="M14.500 2 V17 M57 2 V17" />
    <path strokeWidth="5.500" d="M14.500 0 V17 M57 0 V17" />
    <path strokeWidth="5" d="M9 8 H63" />
    <path stroke="none" fill="#b2b2b2" d="M10.500 32 h6 v6 h-6z M21.500 32 h6 v6 h-6z M33 32 h6 v6 h-6z M10.500 43.500 h6 v6 h-6z M21.500 43.500 h6 v6 h-6z M10.500 55 h6 v6 h-6z M21.500 55 h6 v6 h-6z" />
    <circle cx="53" cy="53" r="21" fill="#fff" stroke="none" />
    <circle cx="53" cy="53" r="16.300" strokeWidth="5" />
    <path strokeWidth="5.500" d="M52.500 43.500 V53 H60" />
  </svg>
);

const TrafficIcon = () => (
  <svg width="96" height="88" viewBox="0 0 96 88" fill="none" stroke="#b2b2b2">
    <path strokeWidth="7.500" strokeLinejoin="round" d="M37 10 Q41 3.800 48 3.800 Q55 3.800 59 10 L90.500 63 Q94 70 90 78 Q86.500 84 79 84 H17 Q9.500 84 6 78 Q2 70 5.500 63Z" />
    <path fill="#b2b2b2" stroke="none" d="M43 31 Q43 27 48 27 Q53 27 53 31 L51.800 55 Q51.500 58.500 48 58.500 Q44.500 58.500 44.200 55Z" />
    <circle cx="48" cy="67" r="5" fill="#b2b2b2" stroke="none" />
  </svg>
);

const MoreIcon = () => (
  <svg width="72" height="72" viewBox="0 0 72 72" fill="#a0a0a0">
    <circle cx="11" cy="35" r="7" />
    <circle cx="36" cy="35" r="7" />
    <circle cx="61" cy="35" r="7" />
  </svg>
);

const tabs: [string, () => React.ReactElement, string][] = [
  ["A proximité", NearIcon, "text-[#1d1d1b]"],
  ["Itinéraires", RouteIcon, "text-[#b2b2b2]"],
  ["Horaires", ScheduleIcon, "text-[#b2b2b2]"],
  ["Trafic", TrafficIcon, "text-[#b2b2b2]"],
  ["Autre", MoreIcon, "text-[#b2b2b2]"],
];

const TabBar = () => (
  <nav className="relative flex h-[250px] flex-col border-t border-[#145560] bg-white">
    <div className="grid w-[1177px] grid-cols-5">
      {tabs.map(([label, Icon, tone]) => (
        <div key={label} className="flex flex-col items-center">
          <div className="mt-[13px] flex h-[88px] items-center justify-center">
            <Icon />
          </div>
          <span className={`mt-[6px] text-[29px] font-medium leading-[36px] tracking-[1px] ${tone} ${INTER}`}>{label}</span>
        </div>
      ))}
    </div>
    <div className="mx-auto mb-6 mt-auto h-[15px] w-[420px] rounded-full bg-black" />
  </nav>
);

export default function App() {
  return (
    <main className="h-[2556px] w-[1179px] overflow-hidden bg-white">
      <section className="relative h-[1202px] overflow-hidden">
        <Map />
        <StatusBar />
        <SearchRow />
      </section>
      <Sheet />
      <TabBar />
    </main>
  );
}
